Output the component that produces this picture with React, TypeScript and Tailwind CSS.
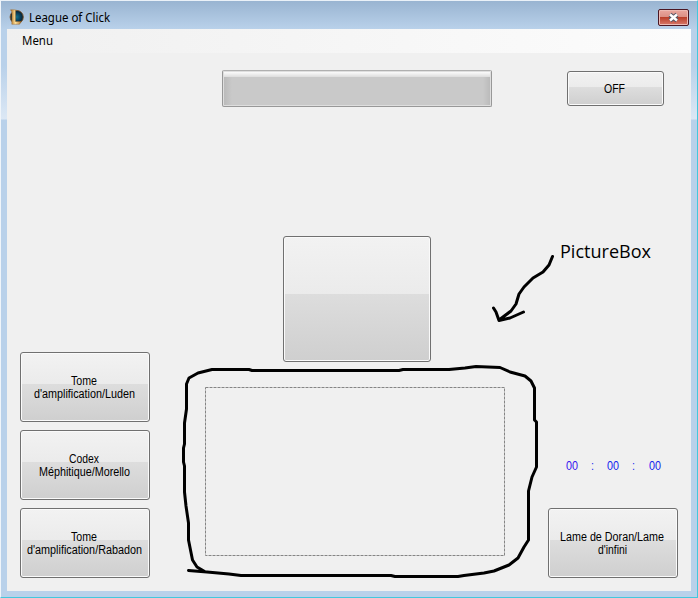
import type { ReactNode } from "react";

const face =
  "rounded-[3px] border border-[#707070] shadow-[inset_0_0_0_1px_#fafafa] bg-[linear-gradient(180deg,#f2f2f2_0%,#ebebeb_46%,#dddddd_46%,#cfcfcf_100%)] flex flex-col items-center justify-center shrink-0 text-black";

function ItemButton({ a, b, wa, wb }: { a: string; b: string; wa: number; wb: number }) {
  return (
    <button className={`${face} h-[70px] w-[130px] pr-[2px] pt-[2px]`}>
      <Line w={wa}>{a}</Line>
      <Line w={wb}>{b}</Line>
    </button>
  );
}

// One line of text fitted to a fixed advance width.
function Line({ w, children, size = 12, h = 13, fill = "#000", font = "'Liberation Sans', Arial, sans-serif" }: {
  w: number; children: ReactNode; size?: number; h?: number; fill?: string; font?: string;
}) {
  return (
    <svg width={w} height={h} className="block shrink-0 overflow-visible">
      <text x="0" y={h - 3} fontSize={size} fill={fill} fontFamily={font} textLength={w} lengthAdjust="spacingAndGlyphs">
        {children}
      </text>
    </svg>
  );
}

function AppIcon() {
  return (
    <svg width="15" height="16" viewBox="0 0 15 16" className="shrink-0">
      <defs>
        <radialGradient id="orb">
          <stop offset="0" stopColor="#14708a" />
          <stop offset=".6" stopColor="#073b58" />
          <stop offset="1" stopColor="#071d2b" />
        </radialGradient>
        <linearGradient id="gold">
          <stop offset="0" stopColor="#a96b20" />
          <stop offset=".45" stopColor="#ffe19a" />
          <stop offset="1" stopColor="#a8692a" />
        </linearGradient>
      </defs>
      <circle cx="7.7" cy="8" r="6.600" fill="url(#orb)" stroke="#795027" strokeWidth=".9" />
      <path d="M1.500 .8H6.500V12.500H12.500L10.500 15.300H2.800L3 3z" fill="url(#gold)" stroke="#8a5a22" strokeWidth=".4" />
    </svg>
  );
}

function Annotation() {
  return (
    <svg className="pointer-events-none absolute -left-px -top-px" width="698" height="598" fill="none" stroke="#000" strokeWidth="3" strokeLinecap="round" strokeLinejoin="round">
      <path d="M205.500 572L197 567L192.500 560L190.500 550L188.500 540V523L186 506L184.500 492V466L183.500 462V448L184.500 444V423L186.500 409V384L189 378L198 373L212 369.500H249L252 370.500H399L403 369.500H449L465 368L476 366.500L500 367.500L510 372L525 376L531 381L534.500 388V420L536.500 422V467L532 477L528.500 491V540L524 547L518 558L509 565L494 571L484 573L464 575.500L458 576.500H395L391 575.500H241L229 574L207 572L188.500 570.500" />
      <path d="M552.500 256.500L549 265L543 272L533 278L524 287L519 294L516 304L511 311L499 320M493.500 308L496 312L499 320.500L510 318L523.500 312" />
      <text x="560" y="258" stroke="none" fill="#000" fontSize="18" fontFamily="'Open Sans', 'Noto Sans', sans-serif" textLength="91" lengthAdjust="spacingAndGlyphs">PictureBox</text>
    </svg>
  );
}

export default function App() {
  const ui = "'Noto Sans', 'Open Sans', sans-serif";
  return (
    <div className="relative flex h-[598px] w-[698px] flex-col overflow-hidden border-b border-l border-r border-t border-b-[#43c8dd] border-l-[#f0f5fa] border-r-[#43c8dd] border-t-[#eaf1f8] bg-[#b9d1ea] bg-[linear-gradient(180deg,#99b4d1_0px,#b9d1ea_29px,#b9d1ea_65px,#dce8f5_118px,#b9d1ea_119px,#b9d1ea_100%)] px-1.5 pb-1.5 font-['Liberation_Sans',sans-serif]">
      <header className="flex h-7 shrink-0 items-start bg-[linear-gradient(180deg,#99b4d1,#b9d1ea)] pl-0.5 pt-2">
        <AppIcon />
        <div className="ml-[5px] mt-[3px]">
          <Line w={81} font={ui} size={12}>League of Click</Line>
        </div>
        <button className="ml-auto mr-[2px] flex h-[17px] w-[31px] items-center justify-center rounded-[2px] border border-[#4b1723] bg-[linear-gradient(180deg,#eaa79f_0%,#dc9085_45%,#b83b26_46%,#d87a6b_100%)] shadow-[inset_0_0_0_1px_#edbab3]">
          <svg width="13" height="11" viewBox="0 0 13 11">
            <path d="M3 2.500L10 8.500M10 2.500L3 8.500" stroke="#535666" strokeWidth="4.500" />
            <path d="M3 2.500L10 8.500M10 2.500L3 8.500" stroke="#fff" strokeWidth="2.500" />
          </svg>
        </button>
      </header>
      <main className="flex h-[562px] shrink-0 flex-col bg-[#f0f0f0]">
        <nav className="flex h-6 shrink-0 bg-[linear-gradient(90deg,#f0f0f0,#fcfcfc)] pl-[15px] pt-[6px]">
          <Line w={31} font={ui} size={12}>Menu</Line>
        </nav>
        <div className="flex h-[183px] shrink-0 pl-[215px] pt-[17px]">
          <div className="h-[37px] w-[270px] rounded-[2px] border border-[#989898] border-t-[#b0b0b0] bg-[linear-gradient(180deg,#ffffff_0px,#f5f5f5_2px,#dddddd_6px,transparent_6px),linear-gradient(90deg,#b9b9b9,#c9c9c9_9px,#c9c9c9_260px,#b9b9b9)] shadow-[inset_0_0_0_1px_#dedede]" />
          <button className={`${face} ml-[75px] mt-px h-[35px] w-[97px] pr-[2px] pt-[2px]`}>
            <Line w={21}>OFF</Line>
          </button>
        </div>
        <button className={`${face} ml-[276px] h-[126px] w-[148px]`} />
        <div className="flex h-[229px] shrink-0 items-end pb-[13px] pl-[13px]">
          <div className="-mt-[10px] flex flex-col gap-2">
            <ItemButton a="Tome" b="d'amplification/Luden" wa={26} wb={101} />
            <ItemButton a="Codex" b="Méphitique/Morello" wa={30} wb={91} />
            <ItemButton a="Tome" b="d'amplification/Rabadon" wa={26} wb={115} />
          </div>
          <div className="mb-[22px] ml-[55px]">
            <svg width="300" height="169" className="block">
              <rect x=".5" y=".5" width="299" height="168" fill="none" stroke="#858585" strokeDasharray="3 1" />
            </svg>
          </div>
          <div className="ml-[43px] flex flex-col">
            <div className="mb-[35px] ml-[18px] flex items-center">
              <Line w={12} fill="#3510ef">00</Line>
              <span className="ml-[13px]"><Line w={3} fill="#2030ef">:</Line></span>
              <span className="ml-[13px]"><Line w={12} fill="#1220ef">00</Line></span>
              <span className="ml-[13px]"><Line w={3} fill="#2030ef">:</Line></span>
              <span className="ml-[14px]"><Line w={12} fill="#1220ef">00</Line></span>
            </div>
            <ItemButton a="Lame de Doran/Lame" b="d'infini" wa={104} wb={29} />
          </div>
        </div>
      </main>
      <Annotation />
      <i className="absolute left-[346px] top-[596px] h-px w-[5px] bg-black" />
      <i className="absolute left-[696px] top-[296px] h-[5px] w-px bg-black" />
    </div>
  );
}
